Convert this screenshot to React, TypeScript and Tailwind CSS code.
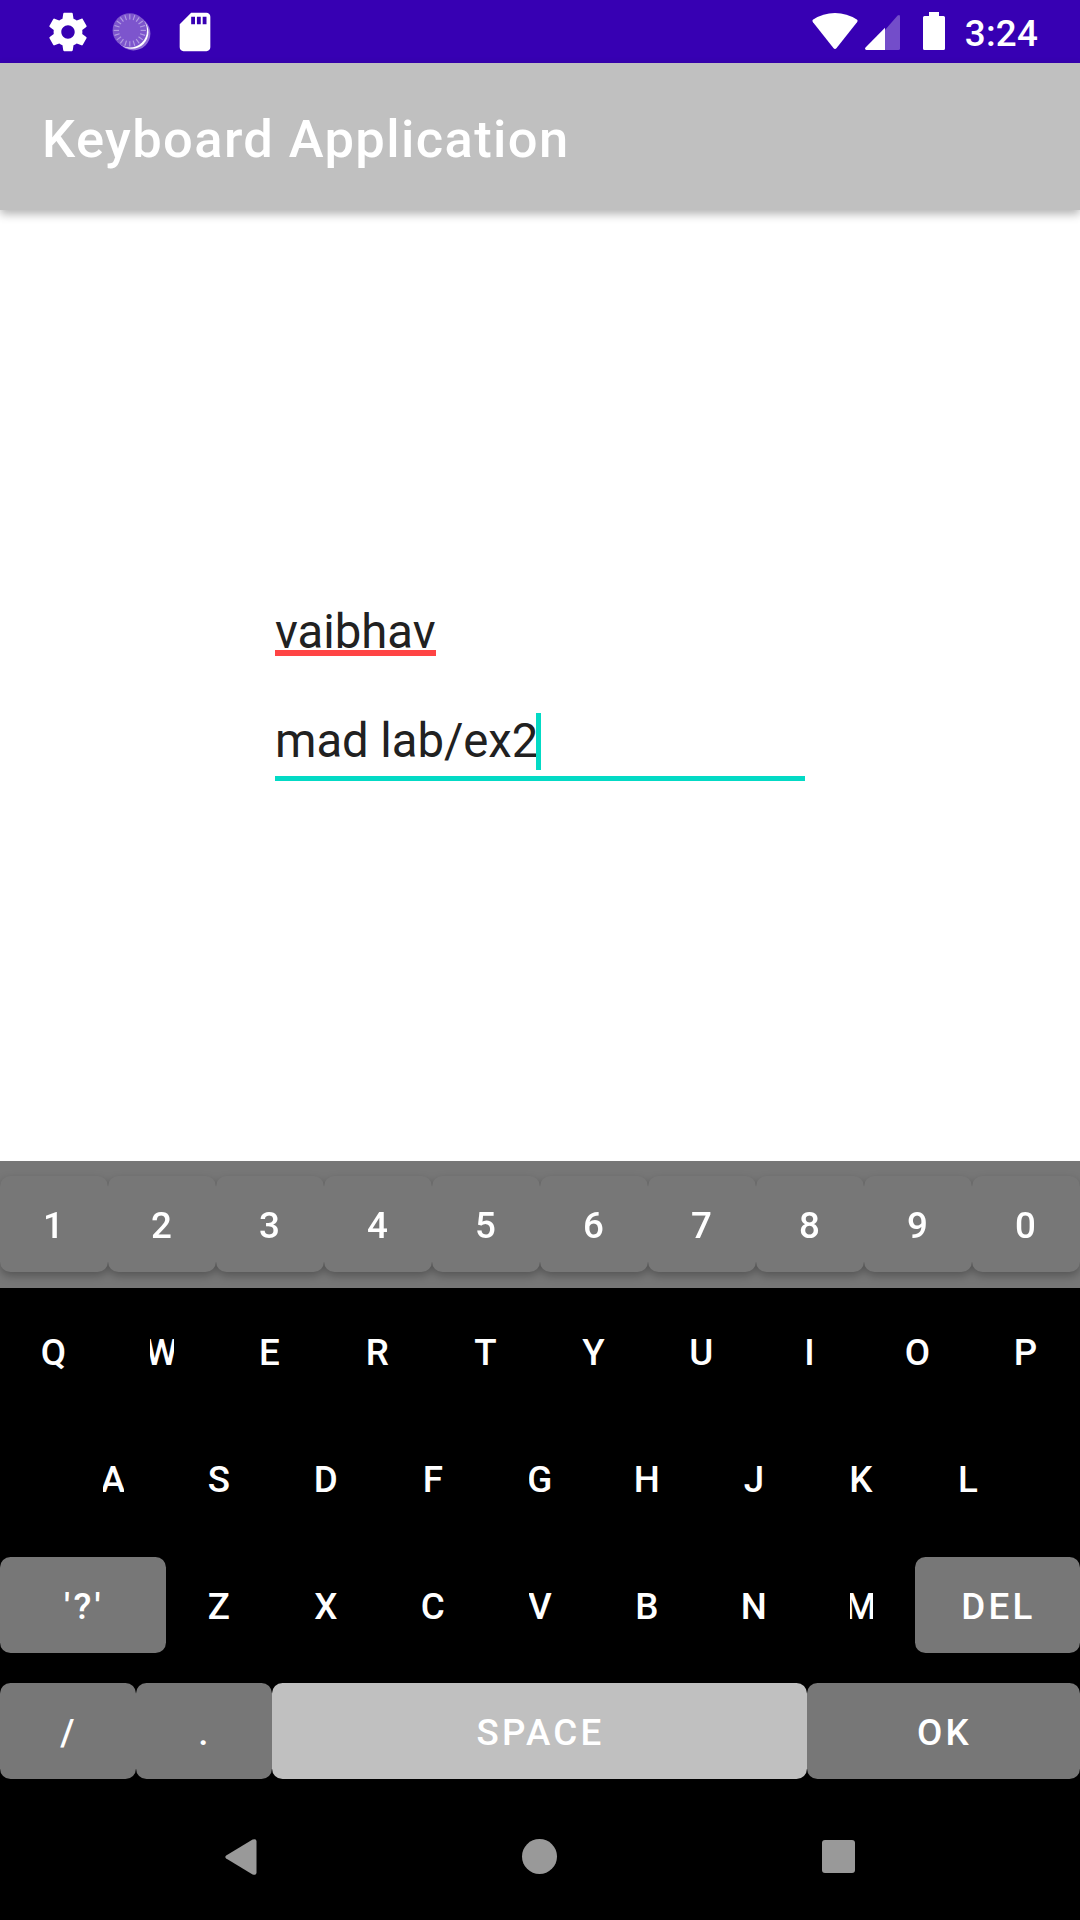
import React from 'react';

const TICKS = Array.from({ length: 20 }, (_, i) => i * 18);

function SettingsIcon() {
  return (
    <svg viewBox="0 0 24 24" className="mr-px h-[46px] w-[46px]" fill="#fff">
      <path d="M19.43 12.98c.04-.32.07-.64.07-.98s-.03-.66-.07-.98l2.11-1.65c.19-.15.24-.42.12-.64l-2-3.46c-.12-.22-.39-.3-.61-.22l-2.49 1c-.52-.4-1.08-.73-1.69-.98l-.38-2.65C14.46 2.18 14.25 2 14 2h-4c-.25 0-.46.18-.49.42l-.38 2.65c-.61.25-1.17.59-1.69.98l-2.49-1c-.23-.09-.49 0-.61.22l-2 3.46c-.13.22-.07.49.12.64l2.11 1.65c-.04.32-.07.65-.07.98s.03.66.07.98l-2.11 1.65c-.19.15-.24.42-.12.64l2 3.46c.12.22.39.3.61.22l2.49-1c.52.4 1.08.73 1.69.98l.38 2.65c.03.24.24.42.49.42h4c.25 0 .46-.18.49-.42l.38-2.65c.61-.25 1.17-.59 1.69-.98l2.49 1c.23.09.49 0 .61-.22l2-3.46c.12-.22.07-.49-.12-.64l-2.11-1.65zM12 15.5c-1.93 0-3.5-1.57-3.5-3.5s1.57-3.5 3.5-3.5 3.5 1.57 3.5 3.5-1.57 3.5-3.5 3.5z" />
    </svg>
  );
}

function DialIcon() {
  return (
    <svg viewBox="0 0 46 46" className="h-[46px] w-[46px]">
      <circle cx="24.4" cy="24.4" r="17" fill="#8f6bd6" />
      <circle cx="22.8" cy="23.2" r="16.6" fill="#fff" />
      <circle cx="20.8" cy="21.4" r="17.2" fill="#7d55cd" />
      {TICKS.map((a) => (
        <line
          key={a}
          x1="20.8"
          y1="10.6"
          x2="20.8"
          y2="5.3"
          stroke="#b39de3"
          strokeWidth="1.1"
          transform={`rotate(${a} 20.8 21.4)`}
        />
      ))}
    </svg>
  );
}

function SdCardIcon() {
  return (
    <svg viewBox="0 0 24 24" className="h-[46px] w-[46px]" fill="#fff">
      <path d="M18 2h-8L4.02 8 4 20c0 1.1.9 2 2 2h12c1.1 0 2-.9 2-2V4c0-1.1-.9-2-2-2zm-6 6h-2V4h2v4zm3 0h-2V4h2v4zm3 0h-2V4h2v4z" />
    </svg>
  );
}

function StatusBar() {
  return (
    <div className="flex h-[63px] items-start justify-between bg-[#3700b3] pr-[42px] pl-[45px]">
      <div className="flex gap-[17px] pt-[8.5px]">
        <SettingsIcon />
        <DialIcon />
        <SdCardIcon />
      </div>
      <div className="flex pt-3">
        <svg viewBox="0 0 46 38" className="mr-[7px] h-[38px] w-[46px]" fill="#fff">
          <path d="M1 10.2 Q-.2 8.6 1.2 7.6 Q11 1 23 1 Q35 1 44.8 7.6 Q46.2 8.6 45 10.2 L24.6 36 Q23 37.9 21.4 36 Z" />
        </svg>
        <svg viewBox="0 0 35 38" className="mr-[23px] h-[38px] w-[35px]" fill="#fff">
          <path d="M20 18 L32.6 3.6 Q35 1.8 35 4.5 V36.4 Q35 38 33.4 38 H20 Z" opacity="0.3" />
          <path d="M20 15.7 V38 H1.4 Q-.8 37.6 .5 35.4 Z" />
        </svg>
        <svg viewBox="0 0 22 38" className="mr-5 h-[38px] w-[22px]" fill="#fff">
          <path d="M6 0 H16 V4 H20.5 Q22 4 22 5.5 V36.5 Q22 38 20.5 38 H1.5 Q0 38 0 36.5 V5.5 Q0 4 1.5 4 H6 Z" />
        </svg>
        <span className="text-[36.75px] leading-[43px] font-medium tracking-[0.2px] text-white">3:24</span>
      </div>
    </div>
  );
}

type KeyProps = { label: string; className?: string; face?: string; tight?: boolean };

// Wide glyphs run past the padded text area of a narrow key and are trimmed there.
const TRIMMED = 'WAVMG';

function Key({ label, className = '', face = '', tight = false }: KeyProps) {
  const trim = tight && TRIMMED.includes(label) ? 'overflow-hidden' : '';
  return (
    <button className={`flex h-24 justify-center rounded-[10.5px] leading-[96px] ${tight ? 'px-[42px]' : ''} ${face} ${className}`}>
      <span className={`flex h-24 min-w-0 flex-1 justify-center pt-0.5 tracking-[3.28px] ${trim}`}>
        <span className="-mr-0.5 shrink-0">{label}</span>
      </span>
    </button>
  );
}

const GREY = 'bg-[#777777]';

function Keyboard() {
  return (
    <div className="bg-black text-[36.75px] font-medium text-white">
      <div className="h-[127px] bg-[#777777]">
        <div className="grid h-[127px] grid-cols-10 overflow-hidden pt-[15px] drop-shadow-[0_4px_4px_rgba(0,0,0,0.28)]">
          {[...'1234567890'].map((k) => (
            <Key key={k} label={k} tight face={GREY} />
          ))}
        </div>
      </div>
      <div className="grid h-[127px] grid-cols-10 pt-[15px]">
        {[...'QWERTYUIOP'].map((k) => (
          <Key key={k} label={k} tight />
        ))}
      </div>
      <div className="flex h-[127px] pt-[15px] pl-[61px]">
        <Key label="A" tight className="w-[105px]" />
        {[...'SDFGHJKL'].map((k) => (
          <Key key={k} label={k} tight className="w-[107px]" />
        ))}
      </div>
      <div className="flex h-[126px] pt-[15px]">
        <Key label="'?'" className="w-[166px]" face={GREY} />
        {[...'ZXCVBNM'].map((k) => (
          <Key key={k} label={k} tight className="w-[107px]" />
        ))}
        <Key label="DEL" className="w-[165px]" face={GREY} />
      </div>
      <div className="flex h-[126px] pt-[15px]">
        <Key label="/" className="w-[136px]" face={GREY} />
        <Key label="." className="w-[136px]" face={GREY} />
        <Key label="SPACE" className="w-[535px]" face="bg-[#c0c0c0]" />
        <Key label="OK" className="w-[273px]" face={GREY} />
      </div>
    </div>
  );
}

function NavigationBar() {
  return (
    <div className="flex h-[126px] items-start bg-black pt-[45px] pl-[225px]">
      <svg viewBox="0 0 32 36" className="h-9 w-8" fill="#999">
        <path d="M1.2 16.4 L27.6 .6 Q31.5 -.9 31.5 2.4 V33.6 Q31.5 36.9 27.6 35.4 L1.2 19.6 Q-.6 18 1.2 16.4Z" />
      </svg>
      <div className="ml-[265px] size-[35px] rounded-full bg-[#999999]" />
      <div className="mt-px ml-[264.5px] size-[33px] rounded-[3px] bg-[#999999]" />
    </div>
  );
}

export default function App() {
  return (
    <div className="flex h-[1920px] w-[1080px] flex-col overflow-hidden bg-white font-['Roboto',sans-serif]">
      <StatusBar />
      <header className="z-10 flex h-[147px] items-center bg-[#c0c0c0] pt-[5px] pl-[42px] shadow-[0_4px_9px_rgba(0,0,0,0.3)]">
        <h1 className="text-[52.5px] font-medium tracking-[1.38px] text-white">Keyboard Application</h1>
      </header>
      <main className="flex flex-1 flex-col items-start pt-[392px] pl-[275px] text-[47.25px] leading-[56px] text-[#212121]">
        <div className="h-[54px] border-b-[6px] border-[#ff4444] leading-[60px]">vaibhav</div>
        <div className="mt-[57px] flex h-[68px] w-[530px] items-start border-b-[5px] border-[#03dac5]">
          <span className="leading-[57px] tracking-[-0.05px]">mad lab/ex2</span>
          <span className="-ml-[2.5px] h-[57px] w-[5px] bg-[#03dac5]" />
        </div>
      </main>
      <Keyboard />
      <NavigationBar />
    </div>
  );
}
